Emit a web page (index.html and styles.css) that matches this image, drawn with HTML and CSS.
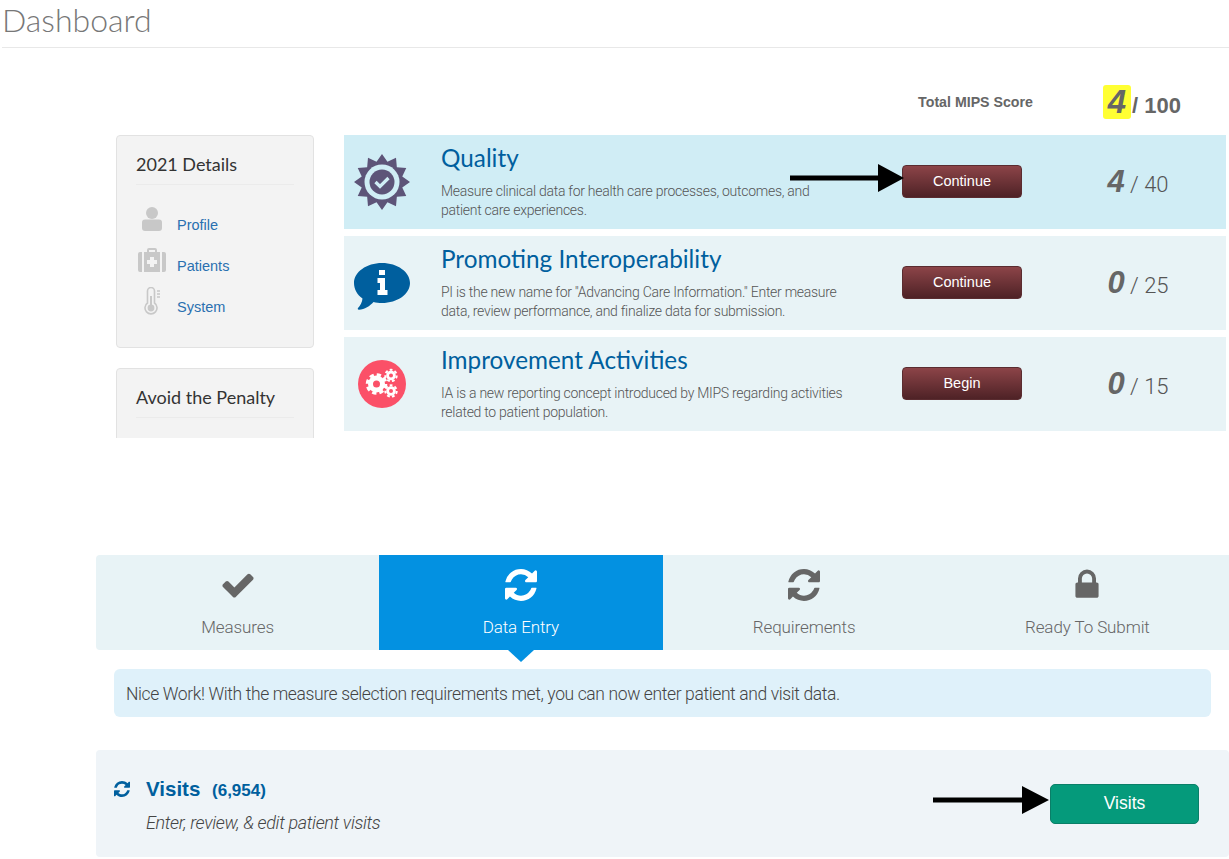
FILE: index.html
```html
<!DOCTYPE html>
<html lang="en">

<head>
    <title>Dashboard</title>
    <link rel="stylesheet" href="styles.css">
</head>

<body>
    <header class="page-head">
        <h1>Dashboard</h1>
    </header>

    <section class="summary">
        <div class="total-row">
            <span class="total-label">Total MIPS Score</span>
            <span class="total-score"><span class="total-num">4</span> / 100</span>
        </div>

        <div class="summary-body">
            <aside class="side">
                <div class="card card-details">
                    <h3>2021 Details</h3>
                    <ul class="side-links">
                        <li>
                            <span class="side-icon">
                                <svg width="20" height="24" viewBox="0 0 20 24"><circle cx="10" cy="6" r="6" fill="#c8c8c8"/><path d="M3 12.500h14q3 0 3 3V21q0 3-3 3H3q-3 0-3-3v-5.500q0-3 3-3z" fill="#c8c8c8"/></svg>
                            </span>
                            <a href="#">Profile</a>
                        </li>
                        <li>
                            <span class="side-icon">
                                <svg width="28" height="24" viewBox="0 0 28 24"><path d="M9 5V2q0-2 2-2h6q2 0 2 2v3h-2V2h-6v3z" fill="#c8c8c8"/><path d="M2 4h2v20H2q-2 0-2-2V6q0-2 2-2zM6 4h16v20H6zM24 4h2q2 0 2 2v16q0 2-2 2h-2z" fill="#c8c8c8"/><path d="M12 9h4v3h3v4h-3v3h-4v-3H9v-4h3z" fill="#f3f3f3"/></svg>
                            </span>
                            <a href="#">Patients</a>
                        </li>
                        <li>
                            <span class="side-icon">
                                <svg width="16" height="28" viewBox="0 0 16 28"><path d="M3.500 16V4a3.500 3.500 0 0 1 7 0v12a6 6 0 1 1-7 0z" fill="none" stroke="#c8c8c8" stroke-width="1.600"/><circle cx="7" cy="21" r="3.400" fill="#c8c8c8"/><rect x="6" y="9" width="2" height="10" fill="#c8c8c8"/><path d="M13 4h3M13 7h3M13 10h3" stroke="#c8c8c8" stroke-width="1.400"/></svg>
                            </span>
                            <a href="#">System</a>
                        </li>
                    </ul>
                </div>
                <div class="card card-penalty">
                    <h3>Avoid the Penalty</h3>
                </div>
            </aside>

            <div class="categories">
                <div class="category category-active">
                    <div class="category-icon">
                        <svg width="56" height="56" viewBox="0 0 56 56">
                            <polygon fill="#5d5478" points="28,0 33.44,7.72 42,3.75 42.85,13.15 52.25,14 48.28,22.56 56,28 48.28,33.44 52.25,42 42.85,42.85 42,52.25 33.44,48.28 28,56 22.56,48.28 14,52.25 13.15,42.85 3.75,42 7.72,33.44 0,28 7.72,22.56 3.75,14 13.15,13.15 14,3.75 22.56,7.72"/>
                            <circle cx="28" cy="28" r="17.500" fill="#d0edf5"/>
                            <circle cx="28" cy="28" r="12.500" fill="#5d5478"/>
                            <path d="M21.500 28l4.500 4.500 8.500-8.500" fill="none" stroke="#d0edf5" stroke-width="3.200"/>
                        </svg>
                    </div>
                    <div class="category-text">
                        <h2>Quality</h2>
                        <p>Measure clinical data for health care processes, outcomes, and patient care experiences.</p>
                    </div>
                    <a class="btn-maroon" href="#">Continue</a>
                    <div class="category-score"><b>4</b> / 40</div>
                    <svg class="arrow arrow-quality" width="114" height="30" viewBox="0 0 114 30"><path d="M0 12.500h88V1l26 14-26 14V17.500H0z" fill="#000"/></svg>
                </div>

                <div class="category">
                    <div class="category-icon category-icon-low">
                        <svg width="56" height="48" viewBox="0 0 56 48">
                            <path d="M28 0c15.500 0 28 9 28 20S43.500 40 28 40c-3 0-6-.3-8.500-1-3.500 4-9 7.500-14.500 7.800-1.500 0-1.600-1.200-.8-2 2-2.300 4-5.300 4.300-9.300C3.300 31.800 0 26.300 0 20 0 9 12.500 0 28 0z" fill="#005f9e"/>
                            <path d="M25 7h6v5h-6zM23.500 15H31v12h2.500v5h-10v-5H26v-7h-2.500z" fill="#fff"/>
                        </svg>
                    </div>
                    <div class="category-text">
                        <h2>Promoting Interoperability</h2>
                        <p>PI is the new name for "Advancing Care Information." Enter measure data, review performance, and finalize data for submission.</p>
                    </div>
                    <a class="btn-maroon" href="#">Continue</a>
                    <div class="category-score"><b>0</b> / 25</div>
                </div>

                <div class="category">
                    <div class="category-icon">
                        <svg width="48" height="48" viewBox="0 0 48 48">
                            <circle cx="24" cy="24" r="24" fill="#fb5068"/>
                            <circle cx="18.500" cy="24" r="6" fill="none" stroke="#fff" stroke-width="5"/>
                            <circle cx="18.500" cy="24" r="9.300" fill="none" stroke="#fff" stroke-width="3" stroke-dasharray="4.300 3"/>
                            <circle cx="33" cy="15.500" r="3.400" fill="none" stroke="#fff" stroke-width="2.800"/>
                            <circle cx="33" cy="15.500" r="5.700" fill="none" stroke="#fff" stroke-width="2" stroke-dasharray="2.800 2.170"/>
                            <circle cx="33" cy="31" r="3.400" fill="none" stroke="#fff" stroke-width="2.800"/>
                            <circle cx="33" cy="31" r="5.700" fill="none" stroke="#fff" stroke-width="2" stroke-dasharray="2.800 2.170"/>
                        </svg>
                    </div>
                    <div class="category-text">
                        <h2>Improvement Activities</h2>
                        <p>IA is a new reporting concept introduced by MIPS regarding activities related to patient population.</p>
                    </div>
                    <a class="btn-maroon" href="#">Begin</a>
                    <div class="category-score"><b>0</b> / 15</div>
                </div>
            </div>
        </div>
    </section>

    <section class="workflow">
        <nav class="steps">
            <a class="step" href="#">
                <svg class="step-icon" width="36" height="36" viewBox="0 0 1792 1792"><path d="M1671 566q0 40-28 68l-724 724-136 136q-28 28-68 28t-68-28l-136-136-362-362q-28-28-28-68t28-68l136-136q28-28 68-28t68 28l294 295 656-657q28-28 68-28t68 28l136 136q28 28 28 68z"/></svg>
                <span>Measures</span>
            </a>
            <a class="step step-active" href="#">
                <svg class="step-icon step-icon-sync" width="32" height="32" viewBox="128 128 1536 1536"><path d="M1639 1056q0 5-1 7-64 268-268 434.500t-478 166.500q-146 0-282.500-55t-243.500-157l-129 129q-19 19-45 19t-45-19-19-45v-448q0-26 19-45t45-19h448q26 0 45 19t19 45-19 45l-137 137q71 66 161 102t187 36q134 0 250-65t186-179q11-17 53-117 8-23 30-23h192q13 0 22.500 9.500t9.500 22.500zm25-800v448q0 26-19 45t-45 19h-448q-26 0-45-19t-19-45 19-45l138-138q-148-137-349-137-134 0-250 65t-186 179q-11 17-53 117-8 23-30 23h-199q-13 0-22.500-9.500t-9.500-22.500v-7q65-268 270-434.500t480-166.500q146 0 284 55.500t245 156.500l130-129q19-19 45-19t45 19 19 45z"/></svg>
                <span>Data Entry</span>
            </a>
            <a class="step" href="#">
                <svg class="step-icon step-icon-sync" width="32" height="32" viewBox="128 128 1536 1536"><path d="M1639 1056q0 5-1 7-64 268-268 434.500t-478 166.500q-146 0-282.500-55t-243.500-157l-129 129q-19 19-45 19t-45-19-19-45v-448q0-26 19-45t45-19h448q26 0 45 19t19 45-19 45l-137 137q71 66 161 102t187 36q134 0 250-65t186-179q11-17 53-117 8-23 30-23h192q13 0 22.500 9.500t9.500 22.500zm25-800v448q0 26-19 45t-45 19h-448q-26 0-45-19t-19-45 19-45l138-138q-148-137-349-137-134 0-250 65t-186 179q-11 17-53 117-8 23-30 23h-199q-13 0-22.500-9.500t-9.500-22.500v-7q65-268 270-434.500t480-166.500q146 0 284 55.500t245 156.500l130-129q19-19 45-19t45 19 19 45z"/></svg>
                <span>Requirements</span>
            </a>
            <a class="step" href="#">
                <svg class="step-icon" width="36" height="36" viewBox="0 0 1792 1792"><path d="M640 768h512v-192q0-106-75-181t-181-75-181 75-75 181v192zm832 96v576q0 40-28 68t-68 28h-960q-40 0-68-28t-28-68v-576q0-40 28-68t68-28h32v-192q0-184 132-316t316-132 316 132 132 316v192h32q40 0 68 28t28 68z"/></svg>
                <span>Ready To Submit</span>
            </a>
        </nav>

        <div class="notice">Nice Work! With the measure selection requirements met, you can now enter patient and visit data.</div>

        <div class="visits">
            <svg class="visits-icon" width="16" height="16" viewBox="128 128 1536 1536"><path d="M1639 1056q0 5-1 7-64 268-268 434.500t-478 166.500q-146 0-282.500-55t-243.500-157l-129 129q-19 19-45 19t-45-19-19-45v-448q0-26 19-45t45-19h448q26 0 45 19t19 45-19 45l-137 137q71 66 161 102t187 36q134 0 250-65t186-179q11-17 53-117 8-23 30-23h192q13 0 22.500 9.500t9.500 22.500zm25-800v448q0 26-19 45t-45 19h-448q-26 0-45-19t-19-45 19-45l138-138q-148-137-349-137-134 0-250 65t-186 179q-11 17-53 117-8 23-30 23h-199q-13 0-22.500-9.500t-9.500-22.500v-7q65-268 270-434.500t480-166.500q146 0 284 55.500t245 156.500l130-129q19-19 45-19t45 19 19 45z"/></svg>
            <div class="visits-text">
                <h2>Visits <small>(6,954)</small></h2>
                <p>Enter, review, &amp; edit patient visits</p>
            </div>
            <a class="btn-green" href="#">Visits</a>
            <svg class="arrow arrow-visits" width="116" height="30" viewBox="0 0 116 30"><path d="M0 12.500h89V1l27 14-27 14V17.500H0z" fill="#000"/></svg>
        </div>
    </section>
</body>

</html>
```

FILE: styles.css
```css
* {
    box-sizing: border-box;
}

html, body {
    overflow: hidden;
}

body {
    margin: 0;
    height: 859px;
    background-color: #ffffff;
    color: #666666;
    font-family: "Liberation Sans", Arial, sans-serif;
}

a {
    text-decoration: none;
}

h1, h2, h3, p, ul {
    margin: 0;
    padding: 0;
}

/* header */
.page-head {
    height: 48px;
    margin-left: 2px;
    border-bottom: 1px solid #e8e8e8;
}

.page-head h1 {
    font-family: Lato, sans-serif;
    font-weight: 300;
    font-size: 32px;
    line-height: 40px;
    color: #777777;
}

/* top part */
.summary {
    padding: 0 3px 0 116px;
}

.total-row {
    display: flex;
    align-items: center;
    justify-content: flex-end;
    height: 87px;
    padding-top: 21px;
    padding-right: 45px;
}

.total-label {
    margin-right: 70px;
    font-size: 14.200px;
    font-weight: bold;
    color: #666666;
}

.total-score {
    font-size: 22px;
    font-weight: bold;
    color: #666666;
}

.total-num {
    display: inline-block;
    width: 28px;
    margin-right: -5px;
    border-radius: 3px;
    background-color: #ffff33;
    font-size: 33px;
    font-style: italic;
    line-height: 34px;
    text-align: center;
}

.summary-body {
    display: flex;
    gap: 30px;
    height: 303px;
}

.side {
    width: 198px;
    flex-shrink: 0;
    overflow: hidden;
}

.card {
    padding: 17px 19px;
    background-color: #f3f3f3;
    border: 1px solid #e2e2e2;
    border-radius: 4px;
}

.card h3 {
    padding-bottom: 9px;
    border-bottom: 1px solid #ebebeb;
    font-family: Lato, sans-serif;
    font-weight: 400;
    font-size: 18px;
    line-height: 22px;
    color: #333333;
}

.card-details {
    height: 213px;
}

.card-penalty {
    height: 90px;
    margin-top: 20px;
}

.side-links {
    margin-top: 15px;
    list-style: none;
}

.side-links li {
    display: flex;
    align-items: center;
    height: 41px;
}

.side-icon {
    display: flex;
    justify-content: center;
    width: 32px;
    margin-right: 9px;
    margin-bottom: 3px;
}

.side-links a {
    padding-top: 9px;
    font-size: 14.500px;
    color: #2a70b0;
}

.categories {
    flex: 1;
    display: flex;
    flex-direction: column;
    gap: 7px;
}

.category {
    position: relative;
    display: flex;
    align-items: center;
    height: 94px;
    background-color: #e8f3f6;
}

.category-active {
    background-color: #d0edf5;
}

.category-icon {
    display: flex;
    justify-content: center;
    width: 76px;
    margin-right: 21px;
}

.category-icon-low {
    margin-top: 8px;
}

.category-text {
    width: 405px;
    margin-right: 56px;
    align-self: flex-start;
    padding-top: 7px;
}

.category-text h2 {
    font-family: Lato, sans-serif;
    font-weight: 400;
    font-size: 24.300px;
    line-height: 32px;
    color: #005f9e;
}

.category-text p {
    margin-top: 8px;
    font-family: Roboto, sans-serif;
    font-weight: 300;
    font-size: 14px;
    letter-spacing: -0.27px;
    line-height: 19px;
    color: #555555;
}

.btn-maroon {
    width: 120px;
    height: 33px;
    margin-bottom: 2px;
    border-radius: 4px;
    border: 1px solid #5a2c30;
    background: linear-gradient(#8c4448, #4e2226);
    color: #ffffff;
    font-size: 14.500px;
    line-height: 31px;
    text-align: center;
}

.category-score {
    width: 176px;
    margin-left: 28px;
    font-family: Roboto, sans-serif;
    font-weight: 300;
    font-size: 22px;
    color: #555555;
    text-align: center;
}

.category-score b {
    font-family: "Liberation Sans", sans-serif;
    font-weight: 700;
    font-size: 31px;
    font-style: italic;
    color: #666666;
}

.arrow {
    position: absolute;
}

.arrow-quality {
    left: 446px;
    top: 28px;
}

.arrow-visits {
    left: 837px;
    top: 35px;
}

/* steps */
.workflow {
    margin-top: 117px;
    margin-left: 96px;
}

.steps {
    display: grid;
    grid-template-columns: repeat(4, 1fr);
    height: 95px;
    background-color: #e8f3f6;
    border-radius: 4px 0 0 4px;
}

.step {
    position: relative;
    display: flex;
    flex-direction: column;
    align-items: center;
    height: 95px;
    padding-top: 12px;
    color: #666666;
    fill: #666666;
}

.step-icon-sync {
    margin: 2px 0;
}

.step span {
    margin-top: 12px;
    font-family: Roboto, sans-serif;
    font-weight: 300;
    font-size: 17px;
    letter-spacing: -0.1px;
    line-height: 24px;
}

.step-active {
    background-color: #0391e1;
    color: #ffffff;
    fill: #ffffff;
}

.step-active::after {
    content: "";
    position: absolute;
    left: 50%;
    bottom: -12px;
    margin-left: -13px;
    border-left: 13px solid transparent;
    border-right: 13px solid transparent;
    border-top: 12px solid #0391e1;
}

.notice {
    height: 48px;
    margin: 19px 18px 0;
    padding-left: 12px;
    border-radius: 6px;
    background-color: #dff1fa;
    font-family: Roboto, sans-serif;
    font-weight: 300;
    font-size: 17.500px;
    letter-spacing: -0.38px;
    line-height: 50px;
    color: #444444;
}

.visits {
    position: relative;
    display: flex;
    align-items: flex-start;
    height: 107px;
    margin-top: 33px;
    padding: 25px 30px 0 18px;
    border-radius: 4px;
    background-color: #eff4f8;
}

.visits-icon {
    margin-top: 6px;
    margin-right: 16px;
    fill: #005f9e;
}

.visits-text {
    flex: 1;
}

.visits-text h2 {
    font-size: 20.500px;
    line-height: 28px;
    color: #005f9e;
}

.visits-text small {
    margin-left: 6px;
    font-size: 17px;
}

.visits-text p {
    margin-top: 6px;
    font-family: Roboto, sans-serif;
    font-weight: 300;
    font-style: italic;
    font-size: 18px;
    letter-spacing: -0.35px;
    line-height: 24px;
    color: #444444;
}

.btn-green {
    width: 149px;
    height: 40px;
    margin-top: 9px;
    border-radius: 5px;
    border: 1px solid #0a7f68;
    background-color: #059a7b;
    color: #ffffff;
    font-size: 17.500px;
    line-height: 36px;
    text-align: center;
}
```
